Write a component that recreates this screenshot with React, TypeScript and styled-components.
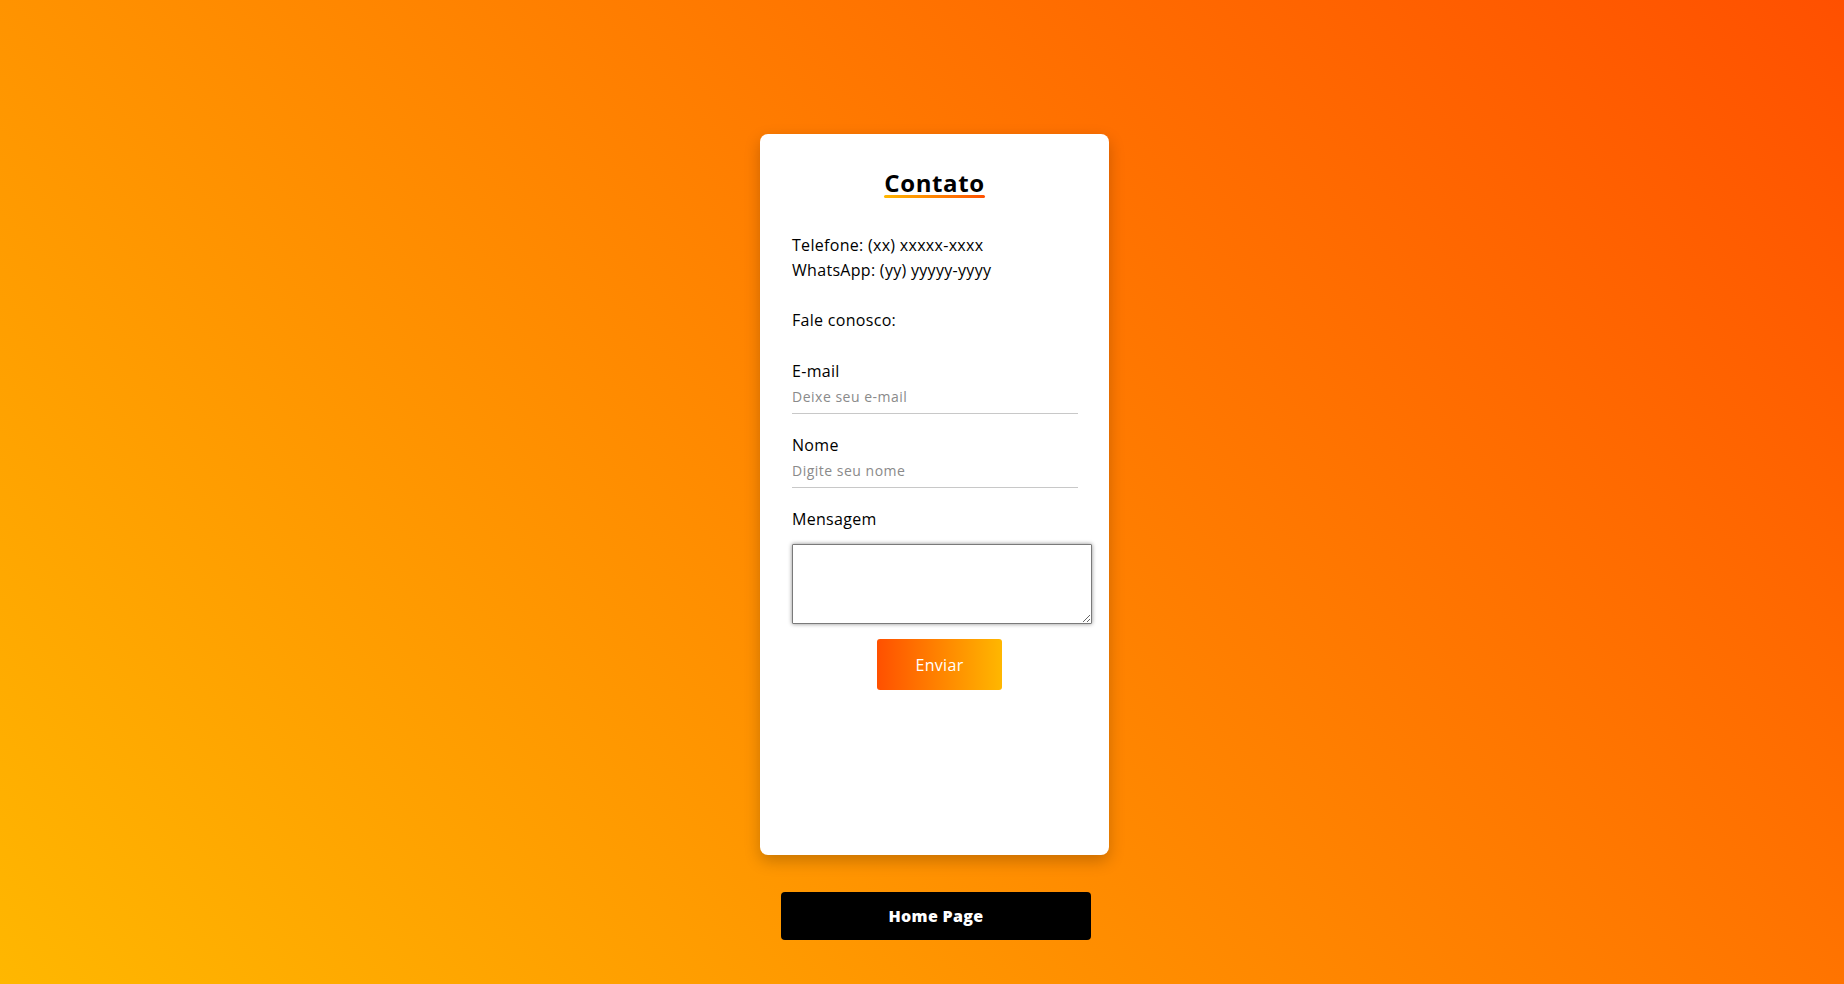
import React from "react";
import styled, { createGlobalStyle } from "styled-components";

const GlobalStyle = createGlobalStyle`
  html, body {
    margin: 0;
    padding: 0;
    height: 100%;
  }
  body {
    font-family: "Open Sans", "Liberation Sans", sans-serif;
    background: linear-gradient(45deg, #ffb700, #ff5000);
    background-attachment: fixed;
    min-height: 100vh;
  }
  * { box-sizing: border-box; }
`;

const Page = styled.main`
  min-height: 100vh;
  display: flex;
  flex-direction: column;
  align-items: center;
  padding: 134px 0 0 25px;
`;

const Card = styled.section`
  width: 349px;
  height: 721px;
  background: #ffffff;
  border-radius: 8px;
  box-shadow: 0 6px 16px rgba(0, 0, 0, 0.22);
  padding: 37px 32px 0 32px;
  display: flex;
  flex-direction: column;
  color: #000;
`;

const TitleWrap = styled.div`
  align-self: center;
  display: inline-flex;
  flex-direction: column;
  align-items: stretch;
`;

const Title = styled.h1`
  margin: 0;
  font-size: 24px;
  line-height: 24px;
  font-weight: 700;
  color: #000;
  letter-spacing: 0.6px;
`;

const TitleBar = styled.div`
  height: 3px;
  border-radius: 2px;
  background: linear-gradient(90deg, #ffb700, #ff5000);
`;

const Info = styled.p<{ $top: number }>`
  margin: ${(p) => p.$top}px 0 0 0;
  font-size: 16px;
  line-height: 25px;
  letter-spacing: 0.3px;
`;

const Form = styled.form`
  display: flex;
  flex-direction: column;
  margin-top: 25px;
`;

const Field = styled.div`
  display: flex;
  flex-direction: column;
  margin-bottom: 18px;
`;

const Label = styled.label`
  font-size: 16px;
  line-height: 26px;
  letter-spacing: 0.3px;
  color: #000;
`;

const Input = styled.input`
  width: 286px;
  height: 30px;
  margin-top: 0;
  padding: 0 0 5px 0;
  border: none;
  border-bottom: 1px solid #c8c8c8;
  outline: none;
  background: transparent;
  font-family: inherit;
  font-size: 14px;
  line-height: 24px;
  letter-spacing: 0.5px;
  color: #000;
  &::placeholder {
    color: #8a8a8a;
  }
`;

const TextArea = styled.textarea`
  width: 300px;
  height: 80px;
  margin-top: 12px;
  border: 1px solid #7a7a7a;
  box-shadow: 0 0 4px rgba(0, 0, 0, 0.45);
  border-radius: 1px;
  resize: both;
  font-family: inherit;
  font-size: 14px;
`;

const SendButton = styled.button`
  margin: 15px 0 0 85px;
  width: 125px;
  height: 51px;
  border: none;
  border-radius: 3px;
  background: linear-gradient(90deg, #ff5000, #ffb700);
  color: #ffffff;
  font-family: inherit;
  font-size: 16px;
  font-weight: 400;
  letter-spacing: 0.3px;
  cursor: pointer;
`;

const HomeButton = styled.a`
  margin: 37px 0 0 3px;
  width: 310px;
  height: 48px;
  border-radius: 4px;
  background: #000000;
  color: #ffffff;
  display: flex;
  align-items: center;
  justify-content: center;
  font-size: 16px;
  font-weight: 800;
  letter-spacing: 0.3px;
  text-decoration: none;
`;

export default function App() {
  return (
    <>
      <GlobalStyle />
      <Page>
        <Card>
          <TitleWrap>
            <Title>Contato</Title>
            <TitleBar />
          </TitleWrap>
          <Info $top={35}>
            Telefone: (xx) xxxxx-xxxx
            <br />
            WhatsApp: (yy) yyyyy-yyyy
          </Info>
          <Info $top={25}>Fale conosco:</Info>
          <Form onSubmit={(e) => e.preventDefault()}>
            <Field>
              <Label htmlFor="email">E-mail</Label>
              <Input id="email" type="email" placeholder="Deixe seu e-mail" />
            </Field>
            <Field>
              <Label htmlFor="nome">Nome</Label>
              <Input id="nome" type="text" placeholder="Digite seu nome" />
            </Field>
            <Label htmlFor="msg">Mensagem</Label>
            <TextArea id="msg" />
            <SendButton type="submit">Enviar</SendButton>
          </Form>
        </Card>
        <HomeButton href="#">Home Page</HomeButton>
      </Page>
    </>
  );
}
